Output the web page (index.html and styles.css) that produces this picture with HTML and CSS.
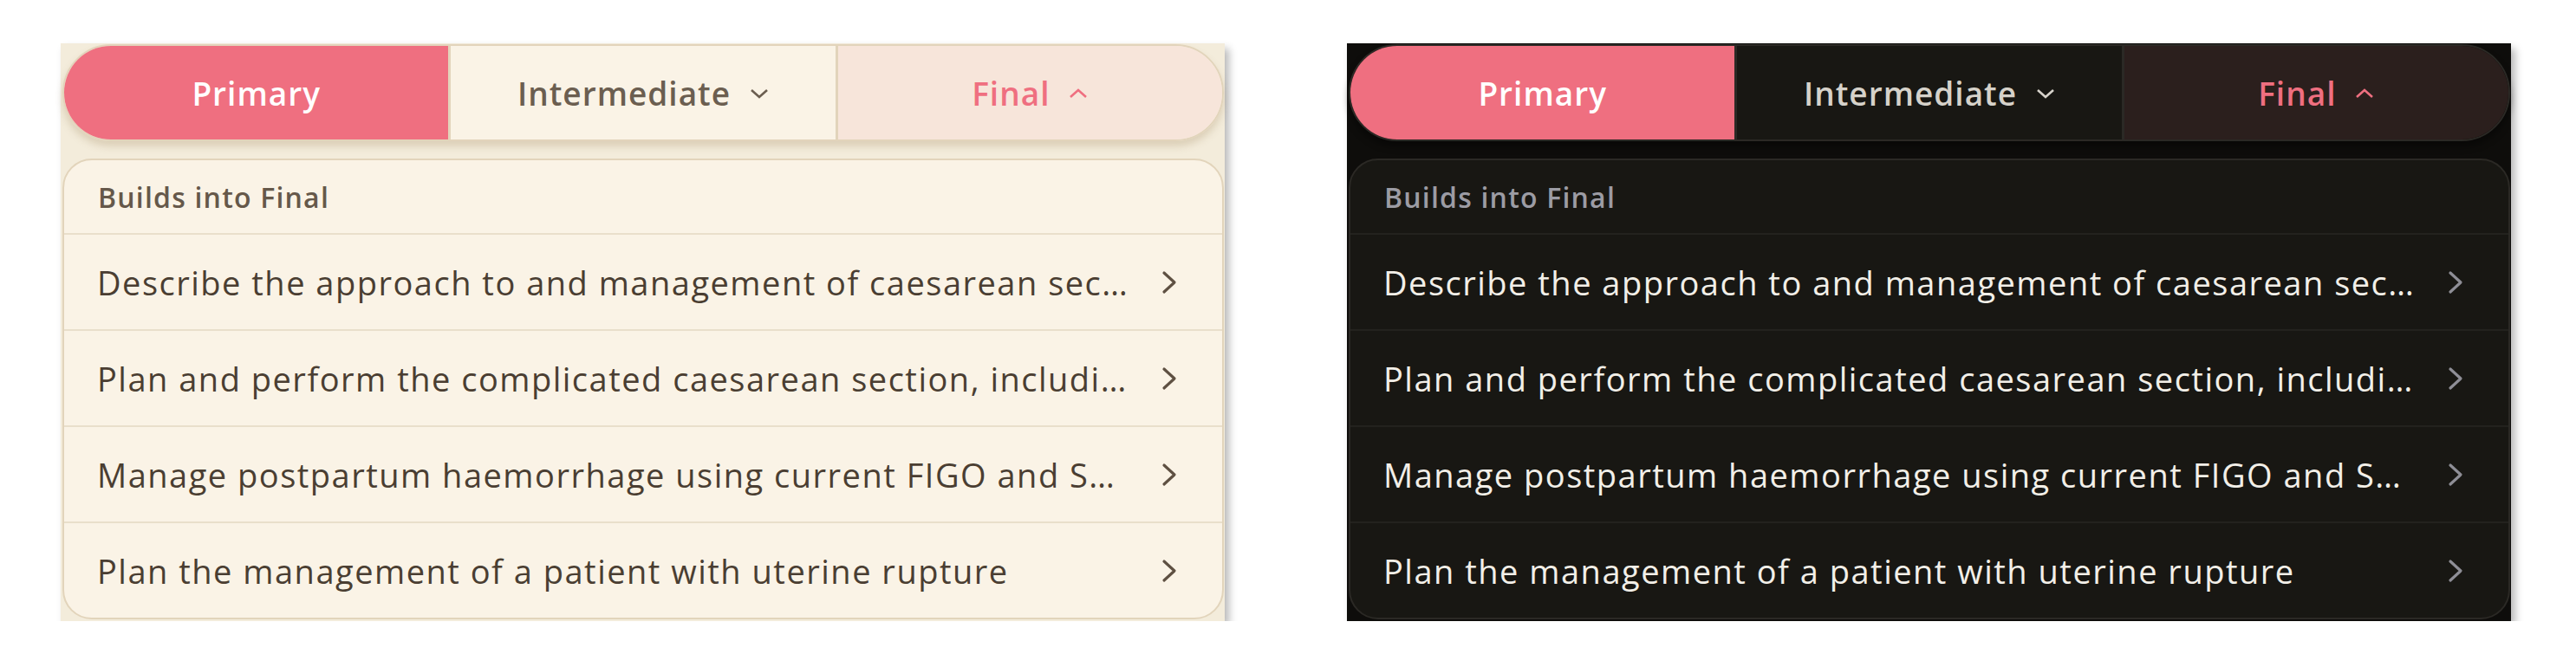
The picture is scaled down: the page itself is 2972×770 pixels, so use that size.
FILE: index.html
```html
<!DOCTYPE html>
<html lang="en">
<head>
    <meta charset="UTF-8">
    <title>Stage picker</title>
    <link rel="stylesheet" href="styles.css">
</head>
<body>
    <div class="stage-board">
        <!-- Light theme -->
        <div class="panel theme-light">
            <div class="stage-tabs">
                <div class="stage-tab active">Primary</div>
                <div class="stage-tab">Intermediate
                    <svg class="caret" viewBox="0 0 22 12"><path d="M2 2 L11 10 L20 2"/></svg>
                </div>
                <div class="stage-tab open">Final
                    <svg class="caret" viewBox="0 0 22 12"><path d="M2 10 L11 2 L20 10"/></svg>
                </div>
            </div>
            <div class="outcome-card">
                <div class="card-head">Builds into Final</div>
                <div class="outcome-row">
                    <span class="outcome-text">Describe the approach to and management of caesarean section at full dilatation</span>
                    <svg class="chevron" viewBox="0 0 18 28"><path d="M3 3 L15 14 L3 25"/></svg>
                </div>
                <div class="outcome-row">
                    <span class="outcome-text">Plan and perform the complicated caesarean section, including placenta accreta</span>
                    <svg class="chevron" viewBox="0 0 18 28"><path d="M3 3 L15 14 L3 25"/></svg>
                </div>
                <div class="outcome-row">
                    <span class="outcome-text">Manage postpartum haemorrhage using current FIGO and Scottish guidance</span>
                    <svg class="chevron" viewBox="0 0 18 28"><path d="M3 3 L15 14 L3 25"/></svg>
                </div>
                <div class="outcome-row">
                    <span class="outcome-text">Plan the management of a patient with uterine rupture</span>
                    <svg class="chevron" viewBox="0 0 18 28"><path d="M3 3 L15 14 L3 25"/></svg>
                </div>
            </div>
        </div>

        <!-- Dark theme -->
        <div class="panel theme-dark">
            <div class="stage-tabs">
                <div class="stage-tab active">Primary</div>
                <div class="stage-tab">Intermediate
                    <svg class="caret" viewBox="0 0 22 12"><path d="M2 2 L11 10 L20 2"/></svg>
                </div>
                <div class="stage-tab open">Final
                    <svg class="caret" viewBox="0 0 22 12"><path d="M2 10 L11 2 L20 10"/></svg>
                </div>
            </div>
            <div class="outcome-card">
                <div class="card-head">Builds into Final</div>
                <div class="outcome-row">
                    <span class="outcome-text">Describe the approach to and management of caesarean section at full dilatation</span>
                    <svg class="chevron" viewBox="0 0 18 28"><path d="M3 3 L15 14 L3 25"/></svg>
                </div>
                <div class="outcome-row">
                    <span class="outcome-text">Plan and perform the complicated caesarean section, including placenta accreta</span>
                    <svg class="chevron" viewBox="0 0 18 28"><path d="M3 3 L15 14 L3 25"/></svg>
                </div>
                <div class="outcome-row">
                    <span class="outcome-text">Manage postpartum haemorrhage using current FIGO and Scottish guidance</span>
                    <svg class="chevron" viewBox="0 0 18 28"><path d="M3 3 L15 14 L3 25"/></svg>
                </div>
                <div class="outcome-row">
                    <span class="outcome-text">Plan the management of a patient with uterine rupture</span>
                    <svg class="chevron" viewBox="0 0 18 28"><path d="M3 3 L15 14 L3 25"/></svg>
                </div>
            </div>
        </div>
    </div>
</body>
</html>
```

FILE: styles.css
```css
/* Page */
body {
    margin: 0;
    background-color: #fff;
    font-family: 'Open Sans', 'Noto Sans', sans-serif;
}

.stage-board {
    display: flex;
    gap: 141px;
    padding: 50px 0 0 70px;
}

/* Theme colours */
.theme-light {
    --frame: #f3ecdb;
    --line: #e2d4bb;
    --divider: #e9dfcb;
    --surface: #faf3e6;
    --open: #f7e5da;
    --text: #4a3e32;
    --muted: #65584a;
    --tab-text: #6b5e50;
    --chevron: #5e5042;
    --pill-shadow: rgba(150, 125, 80, 0.25);
}

.theme-dark {
    --frame: #0e0d0b;
    --line: #2b2925;
    --divider: #23221e;
    --surface: #181713;
    --open: #2b1f1d;
    --text: #f2efe8;
    --muted: #9c9ca4;
    --tab-text: #d6d2ca;
    --chevron: #8e8e96;
    --pill-shadow: rgba(0, 0, 0, 0.4);
}

/* Panel wrapper */
.panel {
    width: 1343px;
    box-sizing: border-box;
    padding: 1px 1px 2px 2px;
    background-color: var(--frame);
    box-shadow: 5px 6px 9px rgba(0, 0, 0, 0.28);
}

/* Segmented stage tabs */
.stage-tabs {
    display: flex;
    height: 112px;
    box-sizing: border-box;
    border: 2px solid var(--line);
    border-radius: 56px;
    overflow: hidden;
    box-shadow: 0 6px 8px var(--pill-shadow);
}

.stage-tab {
    flex: 1;
    display: flex;
    align-items: center;
    justify-content: center;
    gap: 22px;
    background-color: var(--surface);
    color: var(--tab-text);
    font-size: 37px;
    font-weight: 600;
    letter-spacing: 1px;
}

.stage-tab + .stage-tab {
    border-left: 3px solid var(--line);
}

.stage-tab.active {
    background-color: #ef6f80;
    color: #fff;
}

.stage-tab.open {
    background-color: var(--open);
    color: #ef6f80;
}

.stage-tab .caret {
    width: 22px;
    height: 12px;
    fill: none;
    stroke: currentColor;
    stroke-width: 2.6;
    margin-top: 2px;
}

/* Outcome list card */
.outcome-card {
    margin-top: 20px;
    background-color: var(--surface);
    border: 2px solid var(--line);
    border-radius: 34px;
    overflow: hidden;
}

.card-head {
    height: 84px;
    display: flex;
    align-items: center;
    padding-left: 39px;
    font-size: 32px;
    font-weight: 600;
    letter-spacing: 1.2px;
    color: var(--muted);
    border-bottom: 2px solid var(--divider);
}

.outcome-row {
    height: 109px;
    display: flex;
    align-items: center;
    gap: 38px;
    padding: 0 52px 0 38px;
    border-bottom: 2px solid var(--divider);
}

.outcome-row:last-child {
    border-bottom: none;
}

.outcome-text {
    flex: 1;
    min-width: 0;
    white-space: nowrap;
    overflow: hidden;
    text-overflow: ellipsis;
    font-size: 38px;
    font-weight: 500;
    letter-spacing: 1.5px;
    color: var(--text);
}

.chevron {
    width: 18px;
    height: 28px;
    flex-shrink: 0;
    fill: none;
    stroke: var(--chevron);
    stroke-width: 3.2;
    stroke-linecap: round;
    stroke-linejoin: round;
}
```
